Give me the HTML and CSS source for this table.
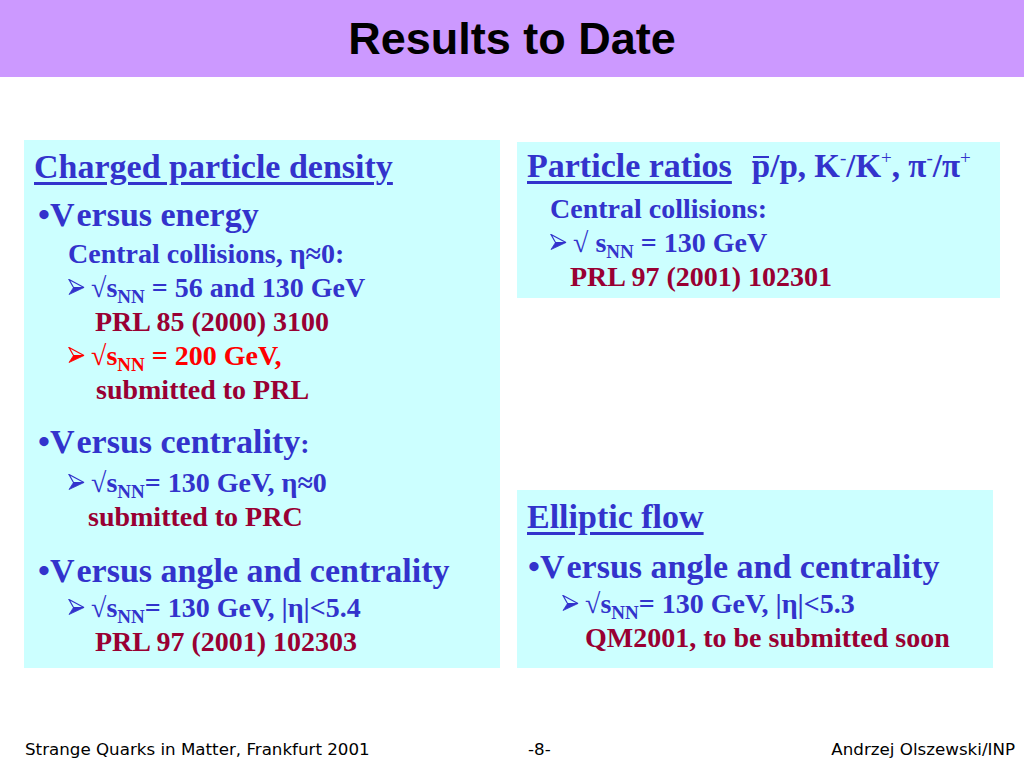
FILE: index.html
```html
<!DOCTYPE html>
<html lang="en">
<head>
<meta charset="utf-8">
<title>Results to Date</title>
<link rel="stylesheet" href="styles.css">
</head>
<body>
<header class="title-bar">
  <h1 class="title">Results to Date</h1>
</header>

<main class="main">
  <section class="box box-left">
    <h2 class="head"><span class="u">Charged particle density</span></h2>
    <div class="point mt8"><span class="dot">•</span><span class="vv">V</span>ersus energy</div>
    <div class="rows mt2">
      <div class="row blue in44">Central collisions, η≈0:</div>
      <div class="row blue in44"><svg class="arrow" viewBox="0 0 16 16"><polygon class="facet-top" points="0.5,0.5 15.5,8.5 5,8.5"/><polygon class="facet-bot" points="5,8.5 15.5,8.5 0.5,15.5"/></svg><span class="rad">√</span>s<span class="nn">NN</span> = 56 and 130 GeV</div>
      <div class="row dred in71">PRL 85 (2000) 3100</div>
      <div class="row red in44"><svg class="arrow" viewBox="0 0 16 16"><polygon class="facet-top" points="0.5,0.5 15.5,8.5 5,8.5"/><polygon class="facet-bot" points="5,8.5 15.5,8.5 0.5,15.5"/></svg><span class="rad">√</span>s<span class="nn">NN</span> = 200 GeV,</div>
      <div class="row dred in72">submitted to PRL</div>
    </div>
    <div class="point mt15"><span class="dot">•</span><span class="vv">V</span>ersus centrality<span class="colon">:</span></div>
    <div class="rows mt2">
      <div class="row blue in44"><svg class="arrow" viewBox="0 0 16 16"><polygon class="facet-top" points="0.5,0.5 15.5,8.5 5,8.5"/><polygon class="facet-bot" points="5,8.5 15.5,8.5 0.5,15.5"/></svg><span class="rad">√</span>s<span class="nn">NN</span>= 130 GeV, η≈0</div>
      <div class="row dred in64">submitted to PRC</div>
    </div>
    <div class="point mt17"><span class="dot">•</span><span class="vv">V</span>ersus angle and centrality</div>
    <div class="rows">
      <div class="row blue in44"><svg class="arrow" viewBox="0 0 16 16"><polygon class="facet-top" points="0.5,0.5 15.5,8.5 5,8.5"/><polygon class="facet-bot" points="5,8.5 15.5,8.5 0.5,15.5"/></svg><span class="rad">√</span>s<span class="nn">NN</span>= 130 GeV, |η|&lt;5.4</div>
      <div class="row dred in71">PRL 97 (2001) 102303</div>
    </div>
  </section>

  <div class="col-right">
    <section class="box box-ratios">
      <h2 class="head"><span class="u">Particle ratios</span><span class="ratios"><span class="pbar">p</span>/p, K<span class="sup">-</span>/K<span class="sup">+</span>, π<span class="sup">-</span>/π<span class="sup">+</span></span></h2>
      <div class="rows mt6">
        <div class="row blue in33">Central collisions:</div>
        <div class="row blue in33"><svg class="arrow" viewBox="0 0 16 16"><polygon class="facet-top" points="0.5,0.5 15.5,8.5 5,8.5"/><polygon class="facet-bot" points="5,8.5 15.5,8.5 0.5,15.5"/></svg><span class="rad">√</span> s<span class="nn">NN</span> = 130 GeV</div>
        <div class="row dred in53">PRL 97 (2001) 102301</div>
      </div>
    </section>

    <section class="box box-flow">
      <h2 class="head"><span class="u">Elliptic flow</span></h2>
      <div class="point point-flow mt10"><span class="dot">•</span><span class="vv">V</span>ersus angle and centrality</div>
      <div class="rows">
        <div class="row blue in45"><svg class="arrow" viewBox="0 0 16 16"><polygon class="facet-top" points="0.5,0.5 15.5,8.5 5,8.5"/><polygon class="facet-bot" points="5,8.5 15.5,8.5 0.5,15.5"/></svg><span class="rad">√</span>s<span class="nn">NN</span>= 130 GeV, |η|&lt;5.3</div>
        <div class="row dred in68">QM2001, to be submitted soon</div>
      </div>
    </section>
  </div>
</main>

<footer class="footer">
  <span class="foot-left">Strange Quarks in Matter, Frankfurt 2001</span>
  <span class="foot-mid">-8-</span>
  <span class="foot-right">Andrzej Olszewski/INP</span>
</footer>
</body>
</html>
```

FILE: styles.css
```css
html, body {
  margin: 0;
  padding: 0;
}

body {
  width: 1024px;
  height: 768px;
  overflow: hidden;
  background: #ffffff;
  font-family: "Liberation Serif", "Times New Roman", serif;
  font-weight: bold;
}

.title-bar {
  height: 77px;
  background: #cc99ff;
  display: flex;
  align-items: center;
  justify-content: center;
}

.title {
  margin: 0;
  font-family: "Liberation Sans", Arial, sans-serif;
  font-weight: bold;
  font-size: 45px;
  line-height: 45px;
  color: #000000;
}

.main {
  display: grid;
  grid-template-columns: 476px 483px;
  column-gap: 17px;
  padding-left: 24px;
  margin-top: 63px;
  height: 528px;
}

.box {
  background: #ccffff;
  box-sizing: border-box;
}

.box-left {
  padding-top: 7px;
}

.col-right {
  display: flex;
  flex-direction: column;
  justify-content: space-between;
  align-items: flex-start;
}

.box-ratios {
  width: 483px;
  margin-top: 2px;
  padding: 4px 0 4px 0;
}

.box-flow {
  width: 476px;
  padding: 7px 0 13px 0;
}

.head {
  margin: 0;
  padding-left: 10px;
  font-size: 34px;
  line-height: 40px;
  font-weight: bold;
  color: #3333cc;
  white-space: nowrap;
}

.u {
  text-decoration: underline;
  text-decoration-thickness: 3px;
  text-underline-offset: 4px;
}

.ratios {
  margin-left: 20px;
  font-size: 33px;
}

.pbar {
  position: relative;
}

.pbar::before {
  content: "";
  position: absolute;
  left: 1px;
  right: 1px;
  top: 8px;
  height: 2px;
  background: currentColor;
}

.sup {
  font-size: 19px;
  font-weight: normal;
  line-height: 0;
  vertical-align: 13px;
}

.point {
  padding-left: 14px;
  font-size: 34px;
  line-height: 40px;
  color: #3333cc;
  white-space: nowrap;
}

.point-flow {
  padding-left: 11px;
}

.vv {
  margin-right: 2px;
}

.colon {
  font-size: 28px;
}

.row {
  font-size: 28px;
  line-height: 34px;
  white-space: nowrap;
}

.blue { color: #3333cc; }
.dred { color: #990033; }
.red { color: #ff0000; }

.in33 { padding-left: 33px; }
.in44 { padding-left: 44px; }
.in45 { padding-left: 45px; }
.in53 { padding-left: 53px; }
.in64 { padding-left: 64px; }
.in68 { padding-left: 68px; }
.in71 { padding-left: 71px; }
.in72 { padding-left: 72px; }

.mt2 { margin-top: 2px; }
.mt6 { margin-top: 6px; }
.mt8 { margin-top: 8px; }
.mt10 { margin-top: 10px; }
.mt15 { margin-top: 15px; }
.mt17 { margin-top: 17px; }

.arrow {
  width: 17px;
  height: 16px;
  vertical-align: 2px;
  margin-right: 6px;
}

.facet-top {
  fill: none;
  stroke: currentColor;
  stroke-width: 1.2;
  stroke-linejoin: miter;
}

.facet-bot {
  fill: currentColor;
  stroke: currentColor;
  stroke-width: 0.8;
}

.rad {
  font-weight: normal;
}

.nn {
  font-size: 19px;
  line-height: 0;
  vertical-align: -6px;
}

.footer {
  display: grid;
  grid-template-columns: 503px auto 1fr;
  padding: 0 9px 0 25px;
  margin-top: 71px;
  font-family: "DejaVu Sans", Verdana, sans-serif;
  font-weight: normal;
  font-size: 16.7px;
  line-height: 20px;
  color: #000000;
}

.foot-right {
  justify-self: end;
}
```
